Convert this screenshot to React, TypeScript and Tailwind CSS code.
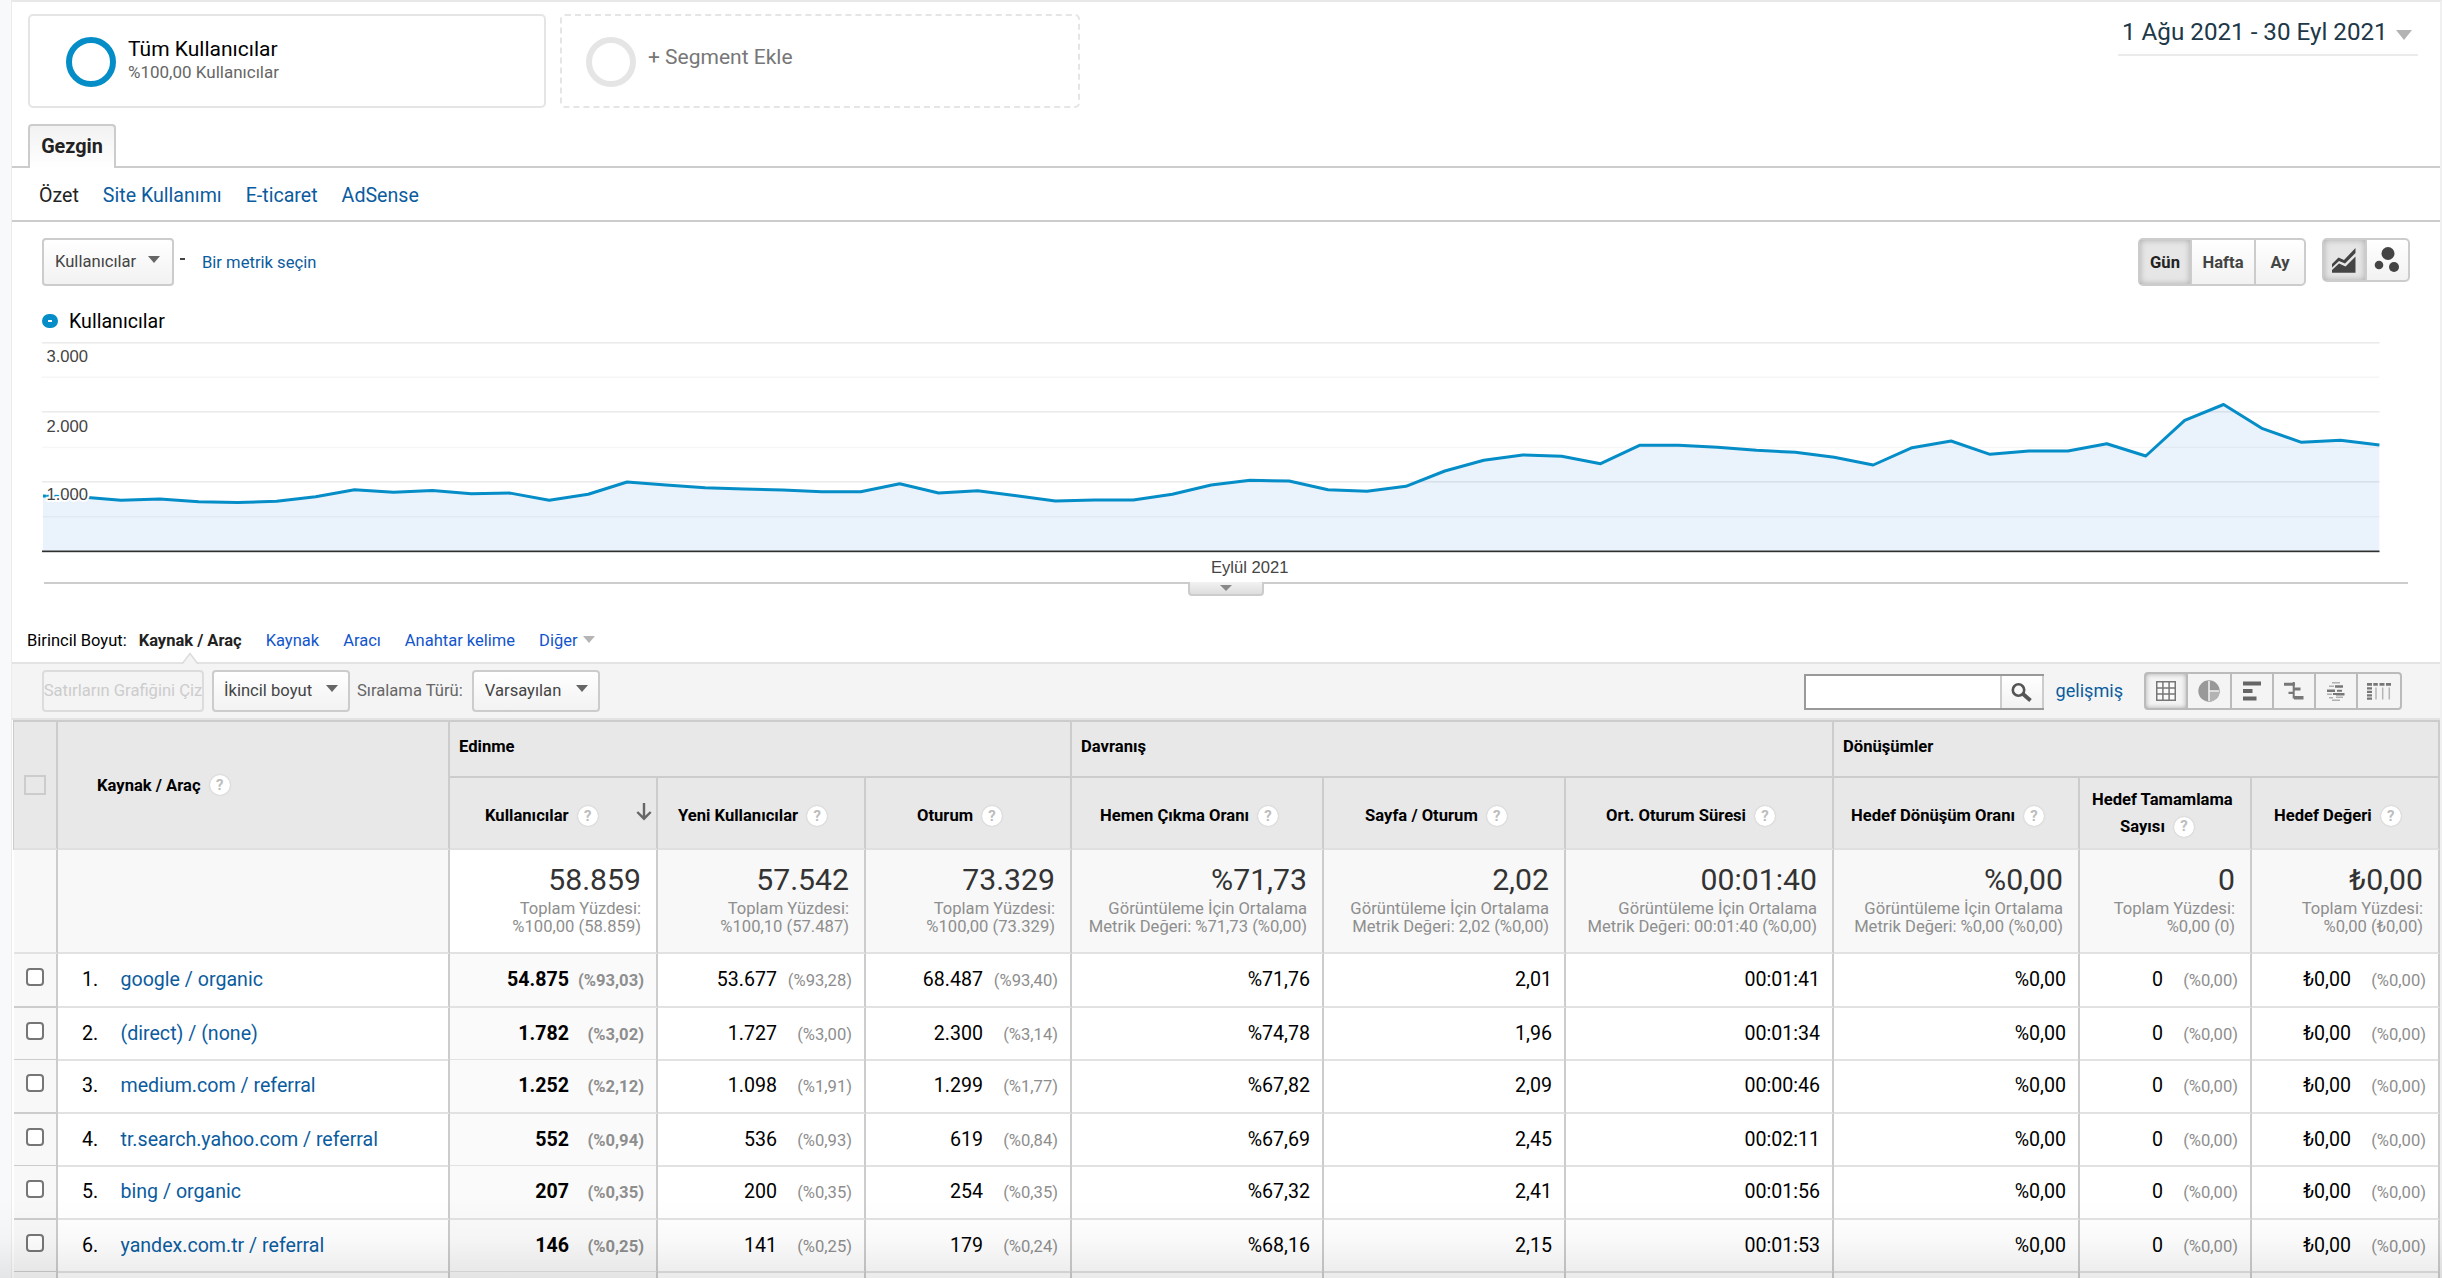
import type { ReactNode } from 'react';
import { clsx } from 'clsx';

type Metric = {
    label: string;
    pad: string;
    total: string;
    note: [string, string];
    sorted?: boolean;
};

const GRID = 'grid grid-cols-[44px_392px_208px_208px_206px_252px_242px_268px_246px_172px_188px]';

// y positions of the daily values, one per day
const points = [
    496, 497, 500.3, 499, 501.7, 502.5, 501.3, 496.7, 489.7, 492.2, 490.5, 493.7, 493.1, 500.3, 494.3, 482, 485,
    487.7, 489, 490, 491.7, 491.8, 483.7, 493, 490.7, 495.7, 501, 500, 500, 494.3, 485, 480.3, 481, 489.7, 491.3,
    486.3, 471, 460.3, 455, 456.3, 463.7, 445.3, 445.3, 447.3, 450.3, 452.3, 457.3, 465, 447.7, 441, 454.3, 451,
    451, 443.7, 456, 420.3, 404.5, 428.7, 442.3, 440.3, 445,
];
const linePoints = points.map((y, i) => `${(43 + i * 38.94).toFixed(1)},${y}`).join(' ');

const average = (v: string): [string, string] => ['Görüntüleme İçin Ortalama', `Metrik Değeri: ${v} (%0,00)`];

const metrics: Metric[] = [
    { label: 'Kullanıcılar', pad: 'pl-[35px]', total: '58.859', note: ['Toplam Yüzdesi:', '%100,00 (58.859)'], sorted: true },
    { label: 'Yeni Kullanıcılar', pad: 'pl-[20px]', total: '57.542', note: ['Toplam Yüzdesi:', '%100,10 (57.487)'] },
    { label: 'Oturum', pad: 'pl-[51px]', total: '73.329', note: ['Toplam Yüzdesi:', '%100,00 (73.329)'] },
    { label: 'Hemen Çıkma Oranı', pad: 'pl-[28px]', total: '%71,73', note: average('%71,73') },
    { label: 'Sayfa / Oturum', pad: 'pl-[41px]', total: '2,02', note: average('2,02') },
    { label: 'Ort. Oturum Süresi', pad: 'pl-[40px]', total: '00:01:40', note: average('00:01:40') },
    { label: 'Hedef Dönüşüm Oranı', pad: 'pl-[17px]', total: '%0,00', note: average('%0,00') },
    { label: 'Hedef Tamamlama', pad: 'pl-[12px]', total: '0', note: ['Toplam Yüzdesi:', '%0,00 (0)'] },
    { label: 'Hedef Değeri', pad: 'pl-[22px]', total: '₺0,00', note: ['Toplam Yüzdesi:', '%0,00 (₺0,00)'] },
];

const rows = [
    { source: 'google / organic', values: ['54.875|93,03', '53.677|93,28', '68.487|93,40', '%71,76', '2,01', '00:01:41'] },
    { source: '(direct) / (none)', values: ['1.782|3,02', '1.727|3,00', '2.300|3,14', '%74,78', '1,96', '00:01:34'] },
    { source: 'medium.com / referral', values: ['1.252|2,12', '1.098|1,91', '1.299|1,77', '%67,82', '2,09', '00:00:46'] },
    { source: 'tr.search.yahoo.com / referral', values: ['552|0,94', '536|0,93', '619|0,84', '%67,69', '2,45', '00:02:11'] },
    { source: 'bing / organic', values: ['207|0,35', '200|0,35', '254|0,35', '%67,32', '2,41', '00:01:56'] },
    { source: 'yandex.com.tr / referral', values: ['146|0,25', '141|0,25', '179|0,24', '%68,16', '2,15', '00:01:53'] },
];
const goals = ['%0,00', '0|0,00', '₺0,00|0,00'];

function Caret({ className, w = 12, h = 7 }: { className?: string; w?: number; h?: number }) {
    return (
        <svg width={w} height={h} viewBox="0 0 12 7" preserveAspectRatio="none" className={clsx('shrink-0 fill-current', className)}>
            <path d="M0 0h12L6 7z" />
        </svg>
    );
}

function Help() {
    return (
        <span className="flex size-5 shrink-0 items-center justify-center rounded-full bg-white text-[15px] leading-none font-bold text-[#bdbdbd] shadow-[0_0_2px_#bbb]">
            ?
        </span>
    );
}

function Select({ children, className }: { children: ReactNode; className: string }) {
    return (
        <button className={clsx('flex items-center justify-between rounded-[4px] border-2 border-[#ccc] bg-linear-to-b from-white to-[#f2f2f2] pt-px text-[16.6px] text-[#444]', className)}>
            {children}
            <Caret className="-mt-1.5 text-[#666]" />
        </button>
    );
}

function Chart() {
    return (
        <svg width="2428" height="248" viewBox="12 334 2428 248" className="block font-['Liberation_Sans',Arial,sans-serif]">
            {[342, 411, 481].map((y) => <rect key={y} x="42" y={y} width="2337.5" height="1.6" fill="#ebebeb" />)}
            {[376.5, 446.7, 516].map((y) => <rect key={y} x="42" y={y} width="2337.5" height="1.4" fill="#f6f6f6" />)}
            <polygon points={`43,550 ${linePoints} 2379.4,550`} fill="#1c74d0" fillOpacity="0.095" />
            <rect x="42" y="550" width="2337.5" height="1" fill="#8d949a" />
            <rect x="42" y="551" width="2337.5" height="1.2" fill="#2f2f2f" />
            <polyline points={linePoints} fill="none" stroke="#058dc7" strokeWidth="3" strokeLinejoin="round" />
            <g fontSize="16.6" fill="#444" stroke="#fff" strokeWidth="4" paintOrder="stroke">
                <text x="46.5" y="361.5">3.000</text>
                <text x="46.5" y="431.5">2.000</text>
                <text x="46.5" y="500.3">1.000</text>
                <text x="1211" y="573">Eylül 2021</text>
            </g>
        </svg>
    );
}

function ViewIcons() {
    const cell = 'flex items-center justify-center border-r-2 border-[#bbb]';
    return (
        <div className="flex h-[38px] rounded-[4px] border-2 border-[#bbb]">
            <div className={clsx(cell, 'w-[42px] shadow-[inset_0_0_5px_#aaa]')}>
                <svg width="20" height="20" viewBox="0 0 20 20" fill="#fafafa" stroke="#777" strokeWidth="1.5">
                    <path d="M.75.75h18.5v18.5H.75zM6.9.75v18.5M13.1.75v18.5M.75 6.9h18.5M.75 13.1h18.5" />
                </svg>
            </div>
            <div className={clsx(cell, 'w-11')}>
                <svg width="22" height="22" viewBox="0 0 22 22">
                    <circle cx="11" cy="11" r="10.7" fill="#999" />
                    <path d="M11 11h10.7A10.7 10.7 0 0 1 11 21.7z" fill="#b3b3b3" />
                    <path d="M11 1v20M11 11h10" stroke="#eee" strokeWidth="1.6" />
                </svg>
            </div>
            <div className={clsx(cell, 'w-[42px]')}>
                <svg width="20" height="20" viewBox="0 0 20 20" fill="#666">
                    <path d="M1 .5h18v4H1zM1 8h9.5v4H1zM1 15.5h13.5v4H1z" />
                </svg>
            </div>
            <div className={clsx(cell, 'w-[42px]')}>
                <svg width="20" height="20" viewBox="0 0 20 20" fill="#777">
                    <path d="M0 1.7h11v3H0zM8.7 1h2v16.5h-2zM10 6.5h6.5v3H10zM4.5 10.7h5V13h-5zM10 15h9.5v3.5H10z" />
                </svg>
            </div>
            <div className={clsx(cell, 'w-[42px]')}>
                <svg width="20" height="20" viewBox="0 0 20 20">
                    <path d="M6 1h8v1.5H6zM3 4.5h5V6H3zM1 12.5h5V14H1zM12 12h6v1.5h-6zM3 16h4v1.5H3zM10 15.500h7V17h-7zM6 18.500h8V20H6z" fill="#b0b0b0" />
                    <path d="M9 4.2h8v2.500H9zM1 8.500h8V11H1zM11 8.700h5v2h-5zM7 12h4v2H7zM10 12h8.500v2.500H10z" fill="#777" />
                </svg>
            </div>
            <div className="flex w-[42px] items-center justify-center">
                <svg width="24" height="20" viewBox="0 0 24 20">
                    <path d="M0 2h5v2.800H0zM6.300 2h4.500v2.800H6.300zM12.500 2h5v2.800h-5zM19 2h5v2.800h-5zM0 6.300h5V8.500H0zM0 9.700h5V12H0zM0 13.200h5v2.200H0zM0 16.500h5v2.200H0z" fill="#777" />
                    <path d="M9 6.500v12M15.700 6.500v12M22.300 6.500v12" stroke="#b5b5b5" strokeWidth="1.500" />
                </svg>
            </div>
        </div>
    );
}

function Value({ value, bold }: { value: string; bold?: boolean }) {
    const [main, share] = value.split('|');
    return (
        <div className={clsx('flex items-baseline justify-end border-r-2 border-b-2 border-r-[#ccc] border-b-[#e2e2e2] pt-0.5 pr-3 leading-[48px]', bold && 'bg-[#fafafa] font-bold')}>
            <span>{main}</span>
            {share && <span className="w-[75px] text-right text-[16.6px] text-[#8e8e8e]">(%{share})</span>}
        </div>
    );
}

export default function App() {
    return (
        <div className="relative flex h-[1278px] w-[2442px] overflow-hidden bg-white font-['Roboto',sans-serif] text-[19.6px] text-black">
            <div className="w-3 shrink-0 border-r border-[#ebecee] bg-[#f8f9fb]" />

            <div className="w-[2430px] shrink-0 border-t-2 border-r-2 border-t-[#e8e8e8] border-r-[#f0f0f0]">
                {/* Segments and date range */}
                <div className="flex h-[106px] items-start pt-3 pl-4">
                    <div className="flex h-[94px] w-[518px] items-start rounded-[5px] border-2 border-[#e5e5e5] pt-[21px] pl-[36px]">
                        <div className="size-[50px] rounded-full border-[6.5px] border-[#058dc7]" />
                        <div className="ml-3">
                            <div className="text-[21px] leading-6">Tüm Kullanıcılar</div>
                            <div className="text-[17px] leading-[23px] text-[#666]">%100,00 Kullanıcılar</div>
                        </div>
                    </div>
                    <div className="ml-[14px] flex h-[94px] w-[520px] items-start rounded-[5px] border-2 border-dashed border-[#e5e5e5] pt-[21px] pl-[24px]">
                        <div className="size-[50px] rounded-full border-[6.5px] border-[#e5e5e5]" />
                        <div className="mt-2 ml-3 text-[21px] leading-6 text-[#777]">+ Segment Ekle</div>
                    </div>
                    <div className="-mt-3 mr-[22px] ml-auto flex h-[54px] w-[300px] items-center border-b-2 border-[#ebebeb] pt-2 pl-1 text-[24.2px] text-[#203848]">
                        1 Ağu 2021 - 30 Eyl 2021
                        <Caret w={16} h={10} className="mt-1.5 mr-1.5 ml-auto text-[#b3b3b3]" />
                    </div>
                </div>

                {/* Tabs */}
                <div className="flex h-[60px] items-end border-b-2 border-[#ccc] pl-4">
                    <div className="-mb-0.5 flex h-11 w-[88px] items-center justify-center rounded-t-[4px] border-2 border-b-0 border-[#ccc] bg-linear-to-b from-[#f2f2f2] to-white text-[19.8px] font-bold text-[#222]">
                        Gezgin
                    </div>
                </div>
                <div className="flex h-[54px] items-center gap-6 border-b-2 border-[#ccc] pt-1 pl-[27px] text-[#0b5c9e]">
                    <span className="text-[#222]">Özet</span>
                    <span>Site Kullanımı</span>
                    <span>E-ticaret</span>
                    <span>AdSense</span>
                </div>

                {/* Chart controls */}
                <div className="flex h-[86px] items-start pt-4 pr-[30px] pl-[30px]">
                    <Select className="h-12 w-[132px] pr-3 pl-[11px]">Kullanıcılar</Select>
                    <span className="mt-5 ml-[6px] h-0.5 w-[5px] bg-[#444]" />
                    <span className="ml-[17px] text-[16.6px] leading-[50px] text-[#0b5c9e]">Bir metrik seçin</span>
                    <div className="ml-auto flex h-12 rounded-[5px] border-2 border-[#ccc] bg-linear-to-b from-white to-[#f2f2f2] text-[16.6px] font-bold text-[#444]">
                        <div className="flex w-[52px] items-center justify-center border-r-2 border-[#ccc] bg-[#e6e6e6] pt-0.5 text-[#222] shadow-[inset_0_0_6px_#aaa]">Gün</div>
                        <div className="flex w-16 items-center justify-center border-r-2 border-[#ccc] pt-0.5">Hafta</div>
                        <div className="flex w-12 items-center justify-center pt-0.5">Ay</div>
                    </div>
                    <div className="ml-4 flex h-11 rounded-[5px] border-2 border-[#ccc] bg-linear-to-b from-white to-[#f2f2f2]">
                        <div className="flex w-[43px] items-center justify-center border-r-2 border-[#ccc] bg-[#e6e6e6] pr-0.5 shadow-[inset_0_0_6px_#aaa]">
                            <svg width="24" height="25" viewBox="0 0 24 25" fill="#444">
                                <path d="M0 16l6.500-6.500 5.500 2.500L23.500 0v5L13 15.500l-6-2.500-7 6.500z" />
                                <path d="M0 22l7-6.500 6.500 3L23.500 8.500v16.200H0z" />
                            </svg>
                        </div>
                        <div className="flex w-[41px] items-center justify-center pr-0.5">
                            <svg width="26" height="26" viewBox="0 0 26 26" fill="#444">
                                <circle cx="14" cy="6.500" r="6.500" />
                                <circle cx="5" cy="18" r="4.300" />
                                <circle cx="20" cy="20" r="5" />
                            </svg>
                        </div>
                    </div>
                </div>
                <div className="flex h-[26px] items-center pl-[30px]">
                    <span className="flex h-[14px] w-4 items-center justify-center rounded-[7px] bg-[#058dc7]">
                        <span className="h-0.5 w-1 bg-white" />
                    </span>
                    <span className="ml-[11px] pt-0.5">Kullanıcılar</span>
                </div>

                <Chart />

                <div className="relative mr-8 ml-8 h-0.5 bg-[#ccc]">
                    <div className="absolute top-0 left-[1144px] flex h-[14px] w-[76px] items-center justify-center rounded-b-[4px] border-2 border-t-0 border-[#ccc] bg-linear-to-b from-[#f2f2f2] to-[#dedede]">
                        <Caret w={12} h={6} className="text-[#888]" />
                    </div>
                </div>

                {/* Primary dimension */}
                <div className="relative flex h-[78px] items-start gap-6 pt-[45px] pl-[15px] text-[16.5px] leading-6 text-[#15c]">
                    <span className="-mr-3 text-black">Birincil Boyut:</span>
                    <span className="font-bold text-[#222]">Kaynak / Araç</span>
                    <span>Kaynak</span>
                    <span>Aracı</span>
                    <span>Anahtar kelime</span>
                    <span className="flex items-center gap-[5px]">
                        Diğer
                        <Caret className="-mt-1 text-[#b5b5b5]" />
                    </span>
                    <svg width="18" height="12" viewBox="0 0 18 12" className="absolute -bottom-0.5 left-[169px]">
                        <path d="M1 12L9 1.500 17 12" fill="#f4f4f4" stroke="#dcdcdc" strokeWidth="1.500" />
                    </svg>
                </div>

                {/* Table toolbar */}
                <div className="flex h-[58px] items-center border-y-2 border-[#e3e3e3] bg-[#f4f4f4] pr-[38px] pl-[30px] text-[16.6px]">
                    <div className="flex h-[42px] w-[162px] items-center justify-center rounded-[4px] border-2 border-[#dcdcdc] whitespace-nowrap text-[#ccc]">
                        Satırların Grafiğini Çiz
                    </div>
                    <Select className="ml-2 h-[42px] w-[138px] pr-2.5 pl-[10px]">İkincil boyut</Select>
                    <span className="ml-[7px] text-[#666]">Sıralama Türü:</span>
                    <Select className="ml-[9px] h-[42px] w-[128px] pr-2.5 pl-[11px]">Varsayılan</Select>

                    <div className="mt-0.5 ml-auto flex h-9 w-[240px] border-2 border-r-0 border-[#999]">
                        <div className="w-[194px] bg-white" />
                        <div className="flex w-11 items-center justify-center border-x-2 border-[#ccc] bg-linear-to-b from-white to-[#f2f2f2]">
                            <svg width="21" height="19" viewBox="0 0 21 19" fill="none" stroke="#555">
                                <circle cx="7.500" cy="7" r="5.700" strokeWidth="2.600" />
                                <path d="M12 11l7.500 6.500" strokeWidth="3.800" />
                            </svg>
                        </div>
                    </div>
                    <span className="mr-[21px] ml-3 text-[18.1px] text-[#0b5c9e]">gelişmiş</span>
                    <ViewIcons />
                </div>

                {/* Table head */}
                <div className="ml-px border-t-2 border-l border-[#ccc] bg-[#e8e8e8] text-[16.6px] font-bold">
                    <div className={clsx(GRID, 'grid-rows-[56px_72px]')}>
                        <div className="row-span-2 flex items-center border-r-2 border-b-2 border-r-[#ccc] border-b-[#e0e0e0] pl-2.5">
                            <span className="h-5 w-[22px] border-2 border-[#ccc]" />
                        </div>
                        <div className="row-span-2 flex items-center gap-[9px] border-r-2 border-b-2 border-r-[#ccc] border-b-[#e0e0e0] pl-[39px]">
                            <span className="pt-0.5">Kaynak / Araç</span> <Help />
                        </div>
                        {['Edinme', 'Davranış', 'Dönüşümler'].map((group) => (
                            <div key={group} className="col-span-3 flex items-center border-r-2 border-b-2 border-[#ccc] pb-[3px] pl-[9px]">
                                {group}
                            </div>
                        ))}
                        {metrics.map((m, i) => (
                            <div key={i} className={clsx('flex items-center gap-[9px] border-r-2 border-b-2 border-r-[#ccc] border-b-[#e0e0e0] pt-1.5 whitespace-nowrap', m.pad)}>
                                {i === 7 ? (
                                    <div className="-mt-[6px] leading-[27px]">
                                        {m.label}
                                        <div className="flex items-center gap-[9px] pl-7">Sayısı <Help /></div>
                                    </div>
                                ) : (
                                    <>
                                        {m.label} <Help />
                                    </>
                                )}
                                {m.sorted && (
                                    <svg width="16" height="18" viewBox="0 0 16 18" fill="none" stroke="#666" strokeWidth="2.400" className="-mt-2 mr-1 ml-auto">
                                        <path d="M8 0v16M1.300 9L8 15.700 14.700 9" />
                                    </svg>
                                )}
                            </div>
                        ))}
                    </div>
                </div>

                {/* Totals */}
                <div className={clsx(GRID, 'ml-0.5 h-[104px] bg-[#f8f8f8]')}>
                    <div className="border-r-2 border-b-2 border-r-[#ccc] border-b-[#e2e2e2]" />
                    <div className="border-r-2 border-b-2 border-r-[#ccc] border-b-[#e2e2e2]" />
                    {metrics.map((m, i) => (
                        <div key={i} className={clsx('border-r-2 border-b-2 border-r-[#ccc] border-b-[#e2e2e2] pt-[14px] pr-[15px] text-right', m.sorted && 'bg-white')}>
                            <div className="text-[30.2px] leading-8 text-[#333]">{m.total}</div>
                            <div className="mt-1 text-[16.6px] leading-[18px] whitespace-nowrap text-[#8e8e8e]">
                                {m.note[0]}<br />{m.note[1]}
                            </div>
                        </div>
                    ))}
                </div>

                {/* Rows */}
                {rows.map((row, i) => (
                    <div key={row.source} className={clsx(GRID, 'ml-0.5', i % 2 ? 'h-[52px]' : 'h-[54px]')}>
                        <div className="border-r-2 border-b-2 border-[#ccc] bg-[#f8f8f8] pt-[14px] pl-3">
                            <div className="size-[18px] rounded-[4px] border-2 border-[#767676] bg-white" />
                        </div>
                        <div className="flex items-baseline border-r-2 border-b-2 border-r-[#ccc] border-b-[#e2e2e2] pt-0.5 pl-6 leading-[48px]">
                            <span className="w-[38.5px]">{i + 1}.</span>
                            <span className="text-[#0b5c9e]">{row.source}</span>
                        </div>
                        {[...row.values, ...goals].map((v, j) => <Value key={j} value={v} bold={j === 0} />)}
                    </div>
                ))}
                <div className={clsx(GRID, 'ml-0.5 h-2')}>
                    {Array.from({ length: 11 }, (_, i) => (
                        <div key={i} className={clsx('border-r-2 border-[#ccc]', (i === 0 || i === 2) && 'bg-[#f8f8f8]')} />
                    ))}
                </div>
            </div>

            {/* Bottom fade */}
            <div className="pointer-events-none absolute inset-x-0 bottom-0 h-20 bg-linear-to-b from-black/0 via-black/2 to-black/8" />
        </div>
    );
}
